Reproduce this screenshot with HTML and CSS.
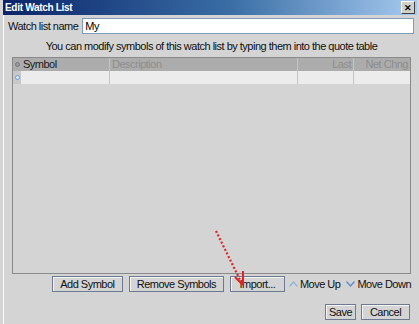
FILE: index.html
```html
<!DOCTYPE html>
<html lang="en">
<head>
    <meta charset="UTF-8">
    <title>Edit Watch List</title>
    <link rel="stylesheet" href="styles.css">
</head>
<body>
    <div class="window">
        <!-- Title bar -->
        <div class="titlebar">
            <span class="title">Edit Watch List</span>
            <span class="close">&#x2715;</span>
        </div>

        <div class="content">
            <div class="name-row">
                <label for="wl-name">Watch list name</label>
                <input id="wl-name" class="name-input" type="text" value="My">
            </div>

            <p class="hint">You can modify symbols of this watch list by typing them into the quote table</p>

            <!-- Quote table -->
            <div class="quote-table">
                <div class="row head">
                    <div class="cell mark"><span class="dot gray"></span></div>
                    <div class="cell symbol">Symbol</div>
                    <div class="cell desc">Description</div>
                    <div class="cell last num">Last</div>
                    <div class="cell chng num">Net Chng</div>
                </div>
                <div class="row entry">
                    <div class="cell mark"><span class="dot blue"></span></div>
                    <div class="cell symbol"></div>
                    <div class="cell desc"></div>
                    <div class="cell last"></div>
                    <div class="cell chng"></div>
                </div>
            </div>

            <div class="actions">
                <button class="btn btn-add">Add Symbol</button>
                <button class="btn btn-remove">Remove Symbols</button>
                <button class="btn btn-import">Import...</button>
                <span class="move move-up">
                    <svg width="9" height="6" viewBox="0 0 9 6"><path d="M0.5 5.5 L4.5 1 L8.5 5.5" fill="none" stroke="#8fb3dd" stroke-width="1.2"/></svg>
                    Move Up
                </span>
                <span class="move">
                    <svg width="9" height="6" viewBox="0 0 9 6"><path d="M0.5 0.5 L4.5 5 L8.5 0.5" fill="none" stroke="#5b8fd0" stroke-width="1.4"/></svg>
                    Move Down
                </span>
            </div>

            <div class="footer">
                <button class="btn btn-save">Save</button>
                <button class="btn btn-cancel">Cancel</button>
            </div>
        </div>

        <!-- Red pointer drawn over the dialog -->
        <svg class="pointer" width="40" height="62" viewBox="0 0 40 62">
            <path d="M2 2 L28 55" fill="none" stroke="#e02424" stroke-width="2.2" stroke-dasharray="2 2"/>
            <path d="M29 42 L29 56 M21 48 L29 56" fill="none" stroke="#e02424" stroke-width="2"/>
        </svg>
    </div>
</body>
</html>
```

FILE: styles.css
```css
/* Global styles */
body {
    margin: 0;
    padding: 0;
    background-color: #d4d4d4;
    font-family: "Liberation Sans", Arial, sans-serif;
    font-size: 11px;
    letter-spacing: -0.5px;
    color: #111;
}

.window {
    position: relative;
    width: 419px;
    height: 324px;
    box-sizing: border-box;
    padding-left: 3px;
    background-color: #d4d4d4;
}

/* Title bar */
.titlebar {
    display: flex;
    align-items: center;
    justify-content: space-between;
    height: 15px;
    padding: 0 2px 0 2px;
    margin-right: 2px;
    background: linear-gradient(to right, #0a246a, #3a6ea5 55%, #a6caf0);
}

.title {
    color: #fff;
    font-weight: bold;
    font-size: 10px;
    letter-spacing: -0.3px;
}

.close {
    display: flex;
    align-items: center;
    justify-content: center;
    width: 12px;
    height: 11px;
    background-color: #d4d0c8;
    border: 1px solid;
    border-color: #fff #404040 #404040 #fff;
    font-size: 9px;
    font-weight: bold;
    letter-spacing: 0;
    color: #000;
}

.content {
    border-left: 1px solid #fff;
    height: 309px;
    padding: 3px 4px 0 4px;
}

/* Name row */
.name-row {
    display: flex;
    align-items: center;
    gap: 4px;
}

.name-input {
    flex: 1;
    height: 14px;
    margin: 0 1px 0 0;
    padding: 0 2px;
    border: 1px solid #7f9db9;
    font-family: inherit;
    font-size: 11px;
    letter-spacing: -0.5px;
    color: #000;
    background-color: #fff;
}

.hint {
    margin: 6px 0 5px 0;
    text-align: center;
}

/* Quote table */
.quote-table {
    margin: 0 4px 0 4px;
    height: 215px;
    border: 1px solid #8a8a8a;
}

.row {
    display: flex;
    height: 13px;
}

.row.head {
    background-color: #acacac;
}

.row.entry {
    background-color: #ececec;
}

.cell {
    box-sizing: border-box;
    padding: 0 2px;
    line-height: 13px;
    border-right: 1px solid #c4c4c4;
    white-space: nowrap;
    overflow: hidden;
}

.row.head .cell {
    color: #8c8c8c;
}

.row.head .cell.symbol {
    color: #1a1a1a;
}

.cell.mark {
    width: 8px;
    padding: 0;
    display: flex;
    align-items: center;
    justify-content: center;
    border-right: none;
    background-color: #c8c8c8;
}

.row.head .cell.mark {
    background-color: #acacac;
}

.cell.symbol { width: 89px; }
.cell.desc { width: 188px; }
.cell.last { width: 56px; }
.cell.chng { width: 56px; border-right: none; }
.cell.num { text-align: right; }

.dot {
    display: block;
    width: 5px;
    height: 5px;
    border-radius: 50%;
    box-sizing: border-box;
}

.dot.gray {
    background-color: #9a9a9a;
    border: 1px solid #787878;
}

.dot.blue {
    background-color: #dbe8f6;
    border: 1px solid #6d9fd8;
}

/* Buttons */
.btn {
    height: 16px;
    padding: 0;
    font-family: inherit;
    font-size: 11px;
    letter-spacing: -0.5px;
    white-space: nowrap;
    color: #111;
    background-color: #d4d4d4;
    border: 1px solid #6c7a92;
    box-shadow: inset 1px 1px 0 #f4f4f4;
    line-height: 13px;
}

.actions {
    display: flex;
    align-items: center;
    justify-content: flex-end;
    gap: 6px;
    margin: 2px 4px 0 0;
}

.btn-add { width: 71px; }
.btn-remove { width: 95px; }
.btn-import { width: 55px; }

.move {
    display: flex;
    align-items: center;
    gap: 2px;
}

.move-up {
    margin-left: -2px;
}

.footer {
    display: flex;
    justify-content: flex-end;
    gap: 5px;
    margin: 12px 5px 0 0;
}

.btn-save { width: 31px; }
.btn-cancel { width: 49px; }

/* Red pointer */
.pointer {
    position: absolute;
    left: 214px;
    top: 229px;
}
```
